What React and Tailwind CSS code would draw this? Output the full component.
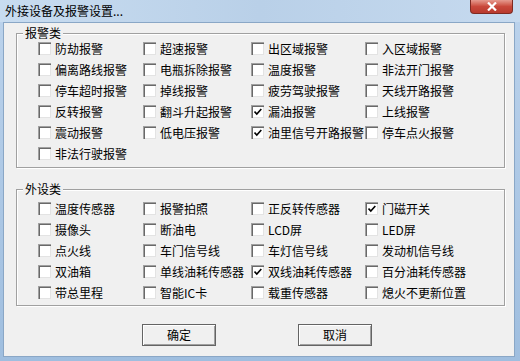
import React from 'react';

const alarms = [
  ['防劫报警', '超速报警', '出区域报警', '入区域报警'],
  ['偏离路线报警', '电瓶拆除报警', '温度报警', '非法开门报警'],
  ['停车超时报警', '掉线报警', '疲劳驾驶报警', '天线开路报警'],
  ['反转报警', '翻斗升起报警', '漏油报警', '上线报警'],
  ['震动报警', '低电压报警', '油里信号开路报警', '停车点火报警'],
  ['非法行驶报警'],
];
const alarmChecked = ['漏油报警', '油里信号开路报警'];

const devices = [
  ['温度传感器', '报警拍照', '正反转传感器', '门磁开关'],
  ['摄像头', '断油电', 'LCD屏', 'LED屏'],
  ['点火线', '车门信号线', '车灯信号线', '发动机信号线'],
  ['双油箱', '单线油耗传感器', '双线油耗传感器', '百分油耗传感器'],
  ['带总里程', '智能IC卡', '载重传感器', '熄火不更新位置'],
];
const deviceChecked = ['门磁开关', '双线油耗传感器'];

const font = { fontFamily: '"Noto Sans CJK SC", "Liberation Sans", sans-serif' };

const Checkbox = ({ checked }) => (
  <span className="relative w-[13px] h-[13px] shrink-0 bg-white border-t border-l border-[#a0a0a0] border-r-white border-b-white shadow-[inset_1px_1px_0_#696969,inset_-1px_-1px_0_#e3e3e3]">
    {checked && (
      <svg className="absolute left-[2px] top-[2px]" width="8" height="8" viewBox="0 0 8 8">
        <path d="M0.5 3.5 L2.8 6 L7.3 1" fill="none" stroke="#000" strokeWidth="1.6" />
      </svg>
    )}
  </span>
);

const Item = ({ label, checked }) => (
  <label className="flex items-center gap-[4px] whitespace-nowrap">
    <Checkbox checked={checked} />
    <span className="leading-none">{label}</span>
  </label>
);

const Group = ({ title, rows, checked, className }) => (
  <div className={`relative border border-[#a0a0a0] shadow-[1px_1px_0_#fff,inset_1px_1px_0_#fff] pl-[21px] ${className}`}>
    <span className="absolute left-[6px] -top-[8px] px-[2px] bg-[#f0f0f0] leading-[14px]">{title}</span>
    {rows.map((row, i) => (
      <div key={i} className="grid grid-cols-[105px_108px_114px_1fr] h-[21px] items-center">
        {row.map(label => (
          <Item key={label} label={label} checked={checked.includes(label)} />
        ))}
      </div>
    ))}
  </div>
);

const WinButton = ({ children }) => (
  <button className="w-[74px] h-[22px] bg-[#f0f0f0] border border-[#646464] shadow-[inset_1px_1px_0_#fff,inset_-1px_-1px_0_#a0a0a0] flex items-center justify-center leading-none">
    {children}
  </button>
);

export default function App() {
  return (
    <div
      className="w-[520px] h-[361px] flex flex-col bg-gradient-to-b from-[#bcd3ec] to-[#9fbedf] text-[12px] text-black"
      style={font}
    >
      <div className="h-[22px] flex items-start justify-between bg-gradient-to-r from-[#c8dcf0] via-[#b9d0e8] to-[#c6daef]">
        <span className="pl-[5px] pt-[5px] text-[12px] leading-none">外接设备及报警设置...</span>
        <div className="mr-[7px] w-[43px] h-[14px] rounded-b-[4px] border border-t-0 border-[#7e2a22] bg-gradient-to-b from-[#e59a8f] via-[#c9483b] to-[#b83a2e] flex items-center justify-center">
          <svg width="10" height="9" viewBox="0 0 10 9">
            <path d="M1 0.5 L9 8.5 M9 0.5 L1 8.5" stroke="#fff" strokeWidth="2.2" />
          </svg>
        </div>
      </div>
      <div className="flex-1 ml-[3px] mr-[5px] mb-[4px] bg-[#f0f0f0] border border-[#8aa7c6] pt-[10px] pl-[12px] pr-[9px]">
        <Group title="报警类" rows={alarms} checked={alarmChecked} className="pt-[4px] pb-[3px]" />
        <Group title="外设类" rows={devices} checked={deviceChecked} className="mt-[21px] pt-[8px] pb-[2px]" />
        <div className="flex gap-[82px] pl-[126px] mt-[18px]">
          <WinButton>确定</WinButton>
          <WinButton>取消</WinButton>
        </div>
      </div>
    </div>
  );
}
